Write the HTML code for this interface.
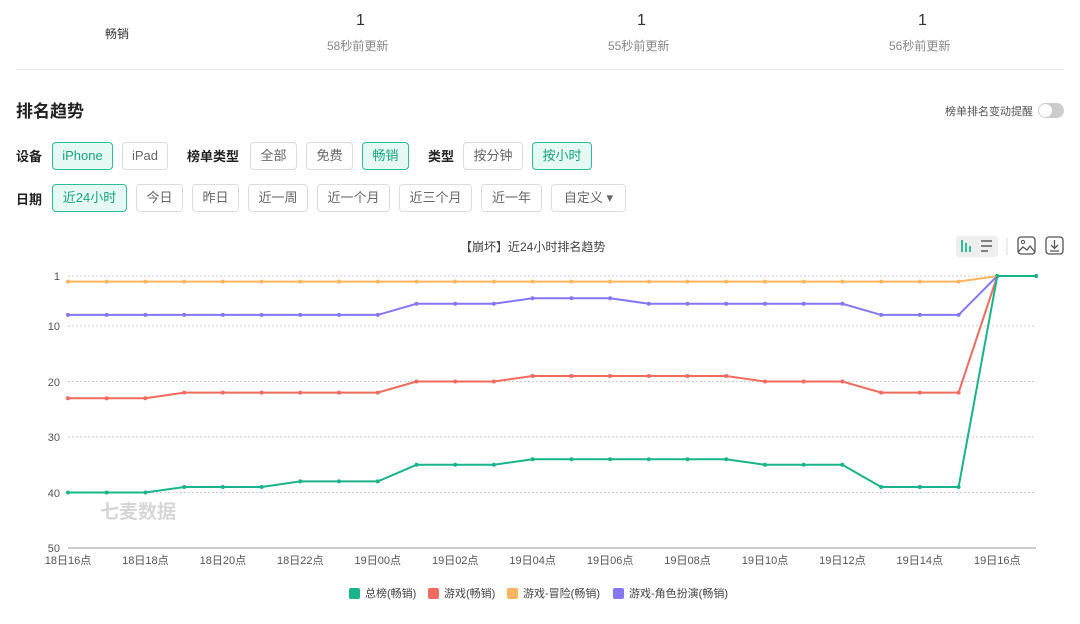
<!DOCTYPE html>
<html><head><meta charset="utf-8"><style>
*{margin:0;padding:0;box-sizing:border-box}
body{width:1080px;height:624px;background:#fff;font-family:"Liberation Sans","Noto Sans CJK SC",sans-serif;color:#333;position:relative;overflow:hidden}
.a{position:absolute;white-space:nowrap}
.btn{position:absolute;height:28px;border:1px solid #ddd;border-radius:4px;font-size:13px;color:#666;line-height:26px;text-align:center}
.on{background:#e6f8f3;border-color:#2ebd97;color:#18a57f}
.lbl{position:absolute;font-size:13px;font-weight:bold;color:#222}
</style></head><body>
<div class="a" style="left:105px;top:25px;font-size:12px">畅销</div>
<div class="a" style="left:356px;top:12px;font-size:16px">1</div>
<div class="a" style="left:327px;top:37px;font-size:12px;color:#888">58秒前更新</div>
<div class="a" style="left:637px;top:12px;font-size:16px">1</div>
<div class="a" style="left:608px;top:37px;font-size:12px;color:#888">55秒前更新</div>
<div class="a" style="left:918px;top:12px;font-size:16px">1</div>
<div class="a" style="left:889px;top:37px;font-size:12px;color:#888">56秒前更新</div>
<div class="a" style="left:16px;top:69px;width:1048px;height:1px;background:#e8e8e8"></div>
<div class="a" style="left:16px;top:97px;font-size:17px;font-weight:bold;color:#222">排名趋势</div>
<div class="a" style="left:945px;top:103px;font-size:11px;color:#555">榜单排名变动提醒</div>
<div class="a" style="left:1038px;top:103px;width:26px;height:15px;border-radius:8px;background:#ccc"><div style="position:absolute;left:1px;top:1px;width:13px;height:13px;border-radius:50%;background:#fff"></div></div>

<div class="lbl" style="left:16px;top:146px">设备</div>
<div class="btn on" style="left:52px;top:142px;width:61px">iPhone</div>
<div class="btn" style="left:122px;top:142px;width:46px">iPad</div>
<div class="lbl" style="left:187px;top:146px">榜单类型</div>
<div class="btn" style="left:250px;top:142px;width:47px">全部</div>
<div class="btn" style="left:306px;top:142px;width:47px">免费</div>
<div class="btn on" style="left:362px;top:142px;width:47px">畅销</div>
<div class="lbl" style="left:428px;top:146px">类型</div>
<div class="btn" style="left:463px;top:142px;width:60px">按分钟</div>
<div class="btn on" style="left:532px;top:142px;width:60px">按小时</div>

<div class="lbl" style="left:16px;top:189px">日期</div>
<div class="btn on" style="left:52px;top:184px;width:75px">近24小时</div>
<div class="btn" style="left:136px;top:184px;width:47px">今日</div>
<div class="btn" style="left:192px;top:184px;width:47px">昨日</div>
<div class="btn" style="left:248px;top:184px;width:60px">近一周</div>
<div class="btn" style="left:317px;top:184px;width:73px">近一个月</div>
<div class="btn" style="left:399px;top:184px;width:73px">近三个月</div>
<div class="btn" style="left:481px;top:184px;width:61px">近一年</div>
<div class="btn" style="left:551px;top:184px;width:75px">自定义 ▾</div>

<div class="a" style="left:460px;top:238px;font-size:12px;color:#444">【崩坏】近24小时排名趋势</div>
<div class="a" style="left:956px;top:236px;width:42px;height:21px;background:#eee;border-radius:3px"></div>
<svg class="a" style="left:0;top:0" width="1080" height="624">
<g stroke="#2ebd97" stroke-width="2"><line x1="962" y1="240" x2="962" y2="252"/><line x1="966" y1="243" x2="966" y2="252"/><line x1="970" y1="246" x2="970" y2="252"/></g>
<g stroke="#666" stroke-width="1.6"><line x1="981" y1="241" x2="992" y2="241"/><line x1="981" y1="246" x2="992" y2="246"/><line x1="981" y1="251" x2="988" y2="251"/></g>
<line x1="1007" y1="238" x2="1007" y2="255" stroke="#ddd"/>
<rect x="1018" y="237" width="17" height="17" rx="3" fill="none" stroke="#555" stroke-width="1.3"/>
<circle cx="1023" cy="242" r="1.6" fill="none" stroke="#555"/>
<path d="M1018 252l5-5 4 3 3-4 5 6" fill="none" stroke="#555" stroke-width="1.3"/>
<rect x="1046" y="237" width="17" height="17" rx="3" fill="none" stroke="#555" stroke-width="1.3"/>
<path d="M1054.5 240v8M1051 245l3.5 3.5 3.5-3.5M1050 251h9" fill="none" stroke="#555" stroke-width="1.3"/>
<defs>
<marker id="mg" markerWidth="6" markerHeight="6" refX="3" refY="3" markerUnits="userSpaceOnUse"><circle cx="3" cy="3" r="2" fill="#1ab38a"/></marker>
<marker id="mr" markerWidth="6" markerHeight="6" refX="3" refY="3" markerUnits="userSpaceOnUse"><circle cx="3" cy="3" r="2" fill="#f06b5f"/></marker>
<marker id="mo" markerWidth="6" markerHeight="6" refX="3" refY="3" markerUnits="userSpaceOnUse"><circle cx="3" cy="3" r="2" fill="#fbb55e"/></marker>
<marker id="mp" markerWidth="6" markerHeight="6" refX="3" refY="3" markerUnits="userSpaceOnUse"><circle cx="3" cy="3" r="2" fill="#8577f2"/></marker>
</defs>
<g stroke="#ccc" stroke-dasharray="2,2" stroke-width="1">
<line x1="68" y1="276" x2="1036" y2="276"/><line x1="68" y1="326" x2="1036" y2="326"/><line x1="68" y1="381.5" x2="1036" y2="381.5"/><line x1="68" y1="437" x2="1036" y2="437"/><line x1="68" y1="492.5" x2="1036" y2="492.5"/>
</g>
<line x1="68" y1="548" x2="1036" y2="548" stroke="#999"/>
<g font-size="11" fill="#555" text-anchor="end">
<text x="60" y="280">1</text><text x="60" y="330">10</text><text x="60" y="386">20</text><text x="60" y="441">30</text><text x="60" y="497">40</text><text x="60" y="552">50</text>
</g>
<g font-size="11" fill="#555" text-anchor="middle">
<text x="68" y="564">18日16点</text><text x="145.4" y="564">18日18点</text><text x="222.9" y="564">18日20点</text><text x="300.3" y="564">18日22点</text><text x="377.8" y="564">19日00点</text><text x="455.2" y="564">19日02点</text><text x="532.6" y="564">19日04点</text><text x="610.1" y="564">19日06点</text><text x="687.5" y="564">19日08点</text><text x="765" y="564">19日10点</text><text x="842.4" y="564">19日12点</text><text x="919.8" y="564">19日14点</text><text x="997.3" y="564">19日16点</text>
</g>
<text x="100" y="518" font-size="19" fill="#d6d6d6" font-weight="bold">七麦数据</text>
<g fill="none" stroke-width="2">
<polyline stroke="#fbb55e" marker-start="url(#mo)" marker-mid="url(#mo)" marker-end="url(#mo)" points="68,281.6 106.7,281.6 145.4,281.6 184.2,281.6 222.9,281.6 261.6,281.6 300.3,281.6 339,281.6 377.8,281.6 416.5,281.6 455.2,281.6 493.9,281.6 532.6,281.6 571.4,281.6 610.1,281.6 648.8,281.6 687.5,281.6 726.2,281.6 765,281.6 803.7,281.6 842.4,281.6 881.1,281.6 919.8,281.6 958.6,281.6 997.3,276 1036,276"/>
<polyline stroke="#8577f2" marker-start="url(#mp)" marker-mid="url(#mp)" marker-end="url(#mp)" points="68,314.9 106.7,314.9 145.4,314.9 184.2,314.9 222.9,314.9 261.6,314.9 300.3,314.9 339,314.9 377.8,314.9 416.5,303.8 455.2,303.8 493.9,303.8 532.6,298.2 571.4,298.2 610.1,298.2 648.8,303.8 687.5,303.8 726.2,303.8 765,303.8 803.7,303.8 842.4,303.8 881.1,314.9 919.8,314.9 958.6,314.9 997.3,276 1036,276"/>
<polyline stroke="#f06b5f" marker-start="url(#mr)" marker-mid="url(#mr)" marker-end="url(#mr)" points="68,398.2 106.7,398.2 145.4,398.2 184.2,392.6 222.9,392.6 261.6,392.6 300.3,392.6 339,392.6 377.8,392.6 416.5,381.5 455.2,381.5 493.9,381.5 532.6,376 571.4,376 610.1,376 648.8,376 687.5,376 726.2,376 765,381.5 803.7,381.5 842.4,381.5 881.1,392.6 919.8,392.6 958.6,392.6 997.3,276 1036,276"/>
<polyline stroke="#1ab38a" marker-start="url(#mg)" marker-mid="url(#mg)" marker-end="url(#mg)" points="68,492.5 106.7,492.5 145.4,492.5 184.2,487 222.9,487 261.6,487 300.3,481.4 339,481.4 377.8,481.4 416.5,464.8 455.2,464.8 493.9,464.8 532.6,459.2 571.4,459.2 610.1,459.2 648.8,459.2 687.5,459.2 726.2,459.2 765,464.8 803.7,464.8 842.4,464.8 881.1,487 919.8,487 958.6,487 997.3,276 1036,276"/>
</g>
<g font-size="11" fill="#444">
<rect x="349" y="588" width="11" height="11" rx="2" fill="#1ab38a"/><text x="365" y="597">总榜(畅销)</text>
<rect x="428" y="588" width="11" height="11" rx="2" fill="#f06b5f"/><text x="444" y="597">游戏(畅销)</text>
<rect x="507" y="588" width="11" height="11" rx="2" fill="#fbb55e"/><text x="523" y="597">游戏-冒险(畅销)</text>
<rect x="613" y="588" width="11" height="11" rx="2" fill="#8577f2"/><text x="629" y="597">游戏-角色扮演(畅销)</text>
</g>
</svg>
</body></html>
